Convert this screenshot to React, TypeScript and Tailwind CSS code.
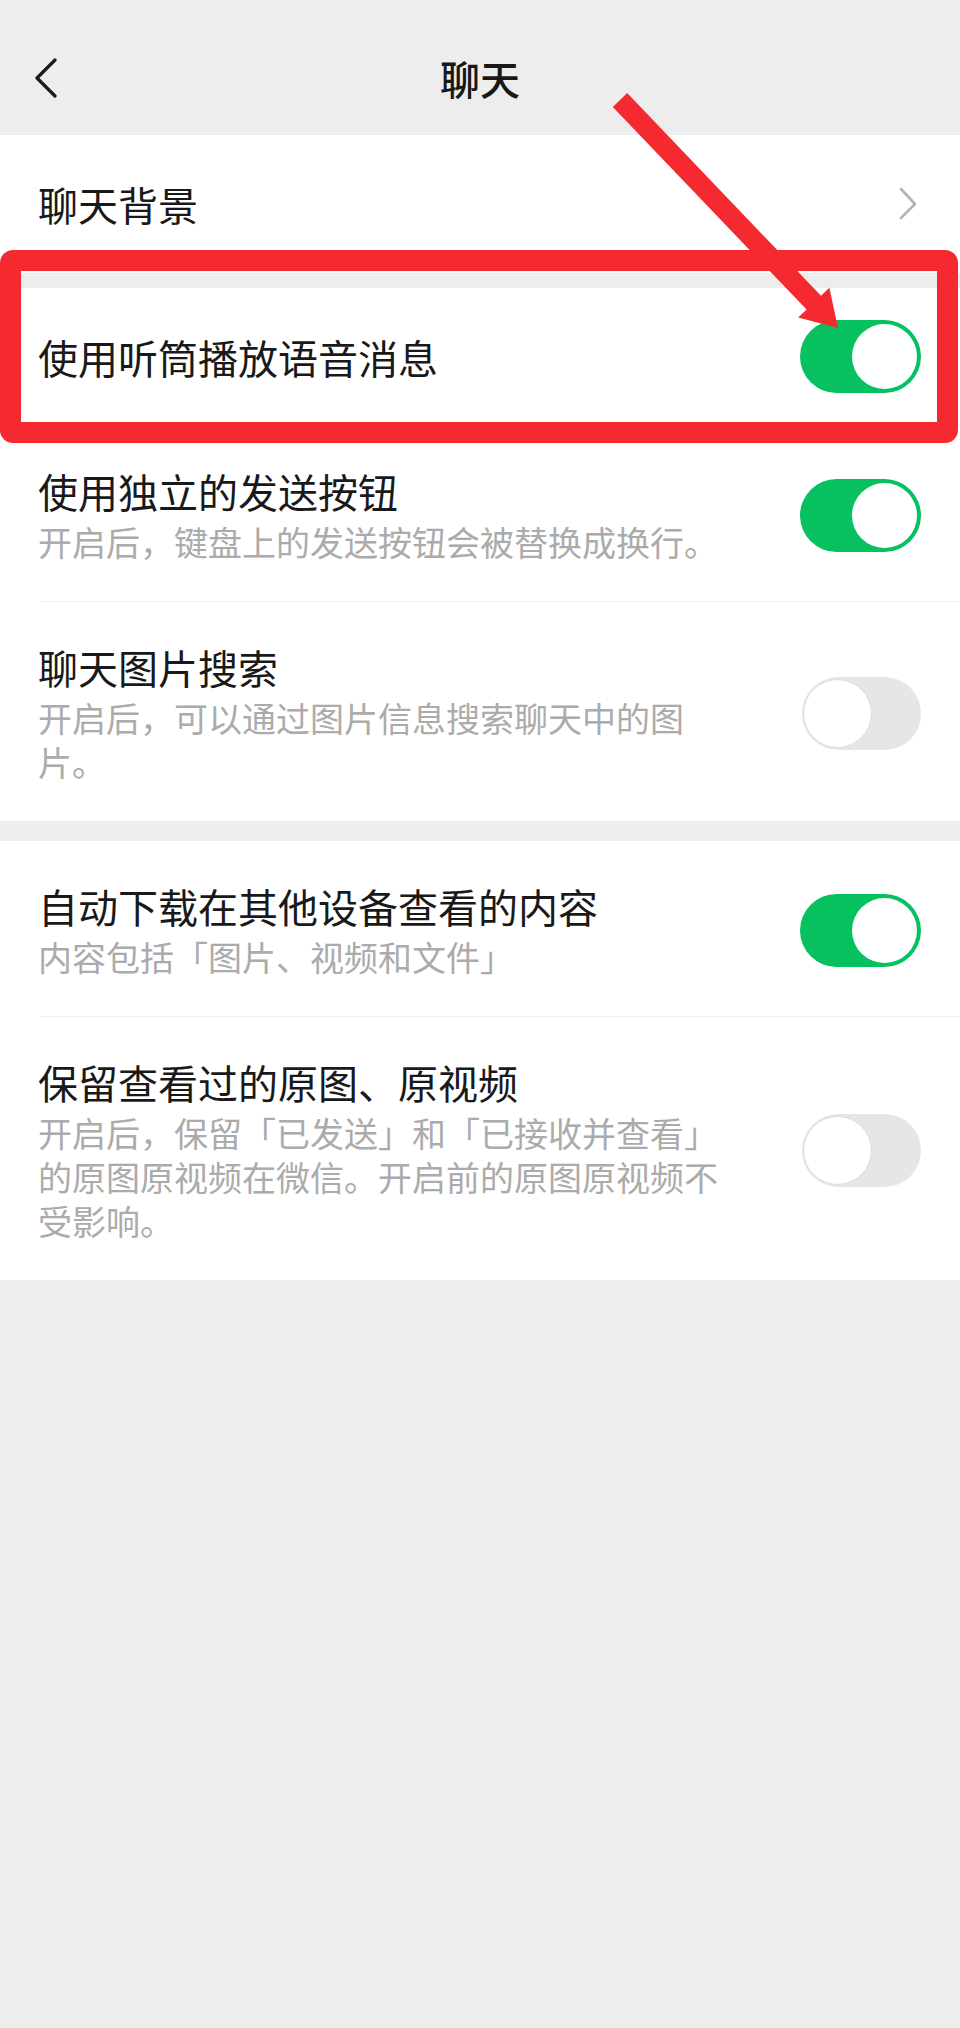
import React from 'react';

interface ToggleProps {
  on: boolean;
}

function Toggle({ on }: ToggleProps) {
  if (on) {
    return (
      <div className="flex h-[73px] w-[121px] shrink-0 items-center justify-end rounded-full bg-[#07c160] p-[4px]">
        <div className="h-[65px] w-[65px] rounded-full bg-white" />
      </div>
    );
  }
  return (
    <div className="flex h-[73px] w-[119px] shrink-0 items-center justify-start rounded-full bg-[#e6e6e6] p-[1px]">
      <div className="h-[69px] w-[69px] rounded-full border border-[#dcdcdc] bg-white" />
    </div>
  );
}

interface SettingRowProps {
  title: string;
  desc?: string;
  on: boolean;
}

function SettingRow({ title, desc, on }: SettingRowProps) {
  if (!desc) {
    return (
      <div className="flex h-[137px] items-center justify-between pl-[38px] pr-[39px]">
        <div className="text-[40px] leading-[50px] text-[#191919]">{title}</div>
        <Toggle on={on} />
      </div>
    );
  }
  return (
    <div className="flex items-center justify-between pb-[37px] pl-[38px] pr-[39px] pt-[40px]">
      <div className="w-[690px]">
        <div className="text-[40px] leading-[50px] text-[#191919]">{title}</div>
        <div className="mt-[4px] text-[34px] leading-[44px] text-[#ababab]">{desc}</div>
      </div>
      <Toggle on={on} />
    </div>
  );
}

function Divider() {
  return <div className="ml-[40px] h-px bg-[#efefef]" />;
}

export default function App() {
  return (
    <div className="relative min-h-[2028px] w-full overflow-hidden bg-[#ededed] font-['Noto_Sans_CJK_SC','Noto_Sans',sans-serif]">
      {/* nav bar */}
      <div className="h-[135px] pt-[40px]">
        <div className="grid h-[76px] grid-cols-[1fr_auto_1fr] items-center">
          <div className="pl-[34px]">
            <svg width="24" height="40" viewBox="0 0 24 40" fill="none">
              <path
                d="M21 2 L3 20 L21 38"
                stroke="#1b1b1b"
                strokeWidth="3.2"
                strokeLinecap="round"
                strokeLinejoin="round"
              />
            </svg>
          </div>
          <div className="text-[40px] font-medium leading-none text-[#181818]">聊天</div>
          <div />
        </div>
      </div>

      {/* chat background */}
      <div className="bg-white">
        <div className="flex h-[138px] items-center justify-between pl-[38px] pr-[42px]">
          <div className="text-[40px] leading-[50px] text-[#191919]">聊天背景</div>
          <svg width="20" height="34" viewBox="0 0 20 34" fill="none">
            <path
              d="M3 2 L17 17 L3 31"
              stroke="#b3b3b3"
              strokeWidth="2.6"
              strokeLinecap="round"
              strokeLinejoin="round"
            />
          </svg>
        </div>
      </div>

      <div className="mt-[15px] bg-white">
        <SettingRow title="使用听筒播放语音消息" on />
        <Divider />
        <SettingRow
          title="使用独立的发送按钮"
          desc="开启后，键盘上的发送按钮会被替换成换行。"
          on
        />
        <Divider />
        <SettingRow
          title="聊天图片搜索"
          desc="开启后，可以通过图片信息搜索聊天中的图片。"
          on={false}
        />
      </div>

      <div className="mt-[20px] bg-white">
        <SettingRow
          title="自动下载在其他设备查看的内容"
          desc="内容包括「图片、视频和文件」"
          on
        />
        <Divider />
        <SettingRow
          title="保留查看过的原图、原视频"
          desc="开启后，保留「已发送」和「已接收并查看」的原图原视频在微信。开启前的原图原视频不受影响。"
          on={false}
        />
      </div>

      {/* annotation: red frame and arrow */}
      <div className="pointer-events-none absolute left-0 top-[250px] h-[193px] w-[958px] rounded-[13px] border-[21px] border-[#f52a30]" />
      <svg
        className="pointer-events-none absolute left-0 top-0"
        width="960"
        height="400"
        viewBox="0 0 960 400"
      >
        <polygon
          points="627.2,93.1 821,295.8 829.4,287.8 838,328 798.2,317.6 806.6,309.6 612.8,106.9"
          fill="#f52a30"
        />
      </svg>
    </div>
  );
}
